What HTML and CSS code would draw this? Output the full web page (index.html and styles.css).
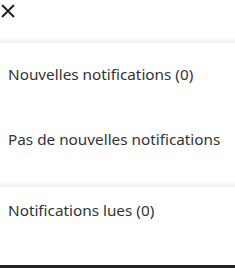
FILE: index.html
```html
<!DOCTYPE html>
<html lang="fr">
<head>
<meta charset="utf-8">
<link rel="stylesheet" href="styles.css">
</head>
<body>
<div class="panel">
  <div class="header">
    <button class="close" aria-label="Fermer">
      <svg width="14" height="14" viewBox="0 0 14 14"><path d="M1 1L13 13M13 1L1 13" stroke="#222" stroke-width="2" fill="none"/></svg>
    </button>
  </div>
  <div class="divider"></div>
  <div class="section-title first">Nouvelles notifications (0)</div>
  <div class="empty">Pas de nouvelles notifications</div>
  <div class="divider"></div>
  <div class="section-title second">Notifications lues (0)</div>
  <div class="bottom-bar"></div>
</div>
</body>
</html>
```
FILE: styles.css
```css
html, body {
  margin: 0;
  padding: 0;
  background: #fff;
}
.panel {
  display: flex;
  flex-direction: column;
  height: 268px;
  font-family: "Noto Sans", "Open Sans", sans-serif;
  font-size: 15.3px;
  line-height: 20px;
  color: #333;
}
.header {
  height: 37px;
  display: flex;
  align-items: flex-start;
}
.close {
  border: 0;
  background: none;
  padding: 0;
  margin: 4px 0 0 1px;
  width: 14px;
  height: 14px;
  display: block;
}
.close svg { display: block; }
.divider {
  height: 6px;
  background: linear-gradient(to bottom, #fff, #f2f2f2);
}
.section-title { padding: 0 8px; }
.section-title.first { padding-top: 21px; }
.section-title.second { padding-top: 13px; }
.empty {
  padding: 45px 8px 32px;
}
.bottom-bar {
  margin-top: auto;
  height: 3px;
  background: #222;
}
```
